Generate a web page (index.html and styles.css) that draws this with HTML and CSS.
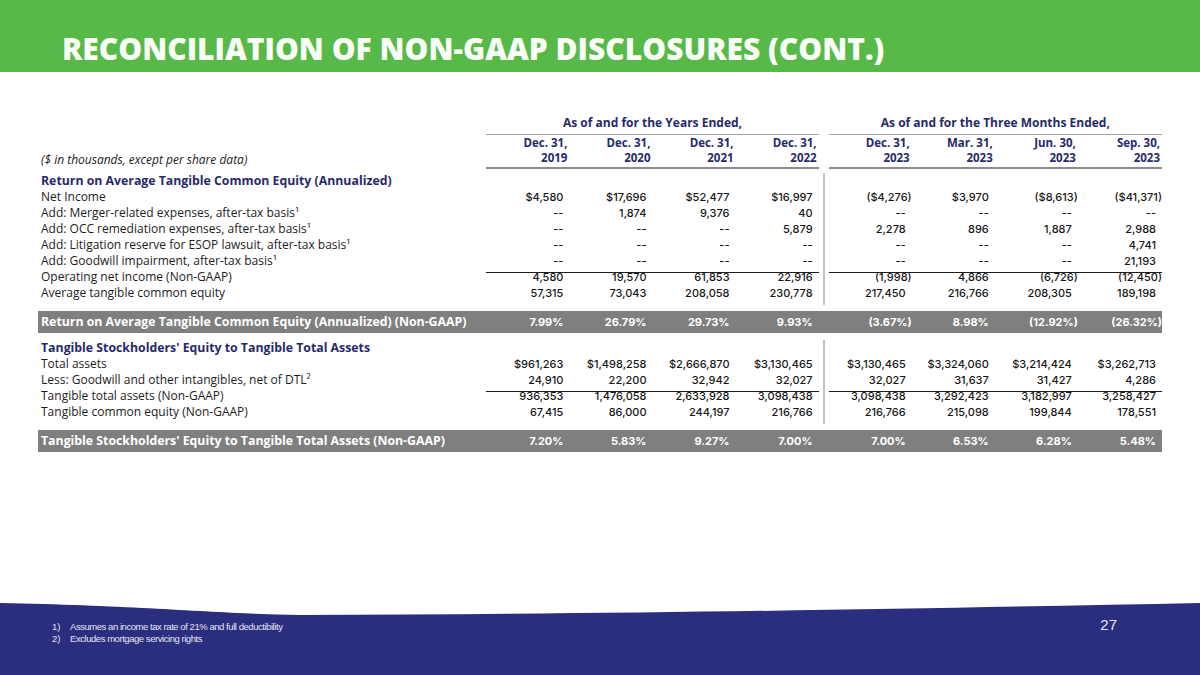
FILE: index.html
```html
<!DOCTYPE html>
<html lang="en">
<head>
<meta charset="utf-8">
<title>Reconciliation of Non-GAAP Disclosures (Cont.)</title>
<link rel="stylesheet" href="styles.css">
</head>
<body>
<div class="slide">
  <header class="banner">
    <h1>RECONCILIATION OF NON-GAAP DISCLOSURES (CONT.)</h1>
  </header>

  <main class="content">
    <table class="recon">
      <colgroup>
        <col class="c-label">
        <col class="c-num"><col class="c-num"><col class="c-num"><col class="c-num">
        <col class="c-sep">
        <col class="c-num"><col class="c-num"><col class="c-num"><col class="c-last">
      </colgroup>
      <thead>
        <tr class="group">
          <th class="blank"></th>
          <th colspan="4">As of and for the Years Ended,</th>
          <th class="sep"></th>
          <th colspan="4">As of and for the Three Months Ended,</th>
        </tr>
        <tr class="dates">
          <th class="unit">($ in thousands, except per share data)</th>
          <th>Dec. 31,<br>2019</th>
          <th>Dec. 31,<br>2020</th>
          <th>Dec. 31,<br>2021</th>
          <th>Dec. 31,<br>2022</th>
          <th class="sep"></th>
          <th>Dec. 31,<br>2023</th>
          <th>Mar. 31,<br>2023</th>
          <th>Jun. 30,<br>2023</th>
          <th>Sep. 30,<br>2023</th>
        </tr>
      </thead>
      <tbody>
        <tr class="sec">
          <td class="lbl">Return on Average Tangible Common Equity (Annualized)</td>
          <td colspan="4"></td><td class="sep line-top"></td><td colspan="4"></td>
        </tr>
        <tr>
          <td class="lbl">Net Income</td>
          <td class="n">$4,580</td><td class="n">$17,696</td><td class="n">$52,477</td><td class="n">$16,997</td>
          <td class="sep line"></td>
          <td class="n p">($4,276)</td><td class="n">$3,970</td><td class="n p">($8,613)</td><td class="n p">($41,371)</td>
        </tr>
        <tr>
          <td class="lbl">Add: Merger-related expenses, after-tax basis¹</td>
          <td class="n">--</td><td class="n">1,874</td><td class="n">9,376</td><td class="n">40</td>
          <td class="sep line"></td>
          <td class="n">--</td><td class="n">--</td><td class="n">--</td><td class="n">--</td>
        </tr>
        <tr>
          <td class="lbl">Add: OCC remediation expenses, after-tax basis¹</td>
          <td class="n">--</td><td class="n">--</td><td class="n">--</td><td class="n">5,879</td>
          <td class="sep line"></td>
          <td class="n">2,278</td><td class="n">896</td><td class="n">1,887</td><td class="n">2,988</td>
        </tr>
        <tr>
          <td class="lbl">Add: Litigation reserve for ESOP lawsuit, after-tax basis¹</td>
          <td class="n">--</td><td class="n">--</td><td class="n">--</td><td class="n">--</td>
          <td class="sep line"></td>
          <td class="n">--</td><td class="n">--</td><td class="n">--</td><td class="n">4,741</td>
        </tr>
        <tr>
          <td class="lbl">Add: Goodwill impairment, after-tax basis¹</td>
          <td class="n">--</td><td class="n">--</td><td class="n">--</td><td class="n">--</td>
          <td class="sep line"></td>
          <td class="n">--</td><td class="n">--</td><td class="n">--</td><td class="n">21,193</td>
        </tr>
        <tr class="tot">
          <td class="lbl">Operating net income (Non-GAAP)</td>
          <td class="n">4,580</td><td class="n">19,570</td><td class="n">61,853</td><td class="n">22,916</td>
          <td class="sep line"></td>
          <td class="n p">(1,998)</td><td class="n">4,866</td><td class="n p">(6,726)</td><td class="n p">(12,450)</td>
        </tr>
        <tr>
          <td class="lbl">Average tangible common equity</td>
          <td class="n">57,315</td><td class="n">73,043</td><td class="n">208,058</td><td class="n">230,778</td>
          <td class="sep line"></td>
          <td class="n">217,450</td><td class="n">216,766</td><td class="n">208,305</td><td class="n">189,198</td>
        </tr>
        <tr class="gap">
          <td></td><td colspan="4"></td><td class="sep line-half"></td><td colspan="4"></td>
        </tr>
        <tr class="band">
          <td class="lbl">Return on Average Tangible Common Equity (Annualized) (Non-GAAP)</td>
          <td class="n">7.99%</td><td class="n">26.79%</td><td class="n">29.73%</td><td class="n">9.93%</td>
          <td class="sep"></td>
          <td class="n p">(3.67%)</td><td class="n">8.98%</td><td class="n p">(12.92%)</td><td class="n p">(26.32%)</td>
        </tr>
        <tr class="gap small">
          <td></td><td colspan="4"></td><td class="sep"></td><td colspan="4"></td>
        </tr>
        <tr class="sec2">
          <td class="lbl">Tangible Stockholders' Equity to Tangible Total Assets</td>
          <td colspan="4"></td><td class="sep line"></td><td colspan="4"></td>
        </tr>
        <tr>
          <td class="lbl">Total assets</td>
          <td class="n">$961,263</td><td class="n">$1,498,258</td><td class="n">$2,666,870</td><td class="n">$3,130,465</td>
          <td class="sep line"></td>
          <td class="n">$3,130,465</td><td class="n">$3,324,060</td><td class="n">$3,214,424</td><td class="n">$3,262,713</td>
        </tr>
        <tr>
          <td class="lbl">Less: Goodwill and other intangibles, net of DTL²</td>
          <td class="n">24,910</td><td class="n">22,200</td><td class="n">32,942</td><td class="n">32,027</td>
          <td class="sep line"></td>
          <td class="n">32,027</td><td class="n">31,637</td><td class="n">31,427</td><td class="n">4,286</td>
        </tr>
        <tr class="tot">
          <td class="lbl">Tangible total assets (Non-GAAP)</td>
          <td class="n">936,353</td><td class="n">1,476,058</td><td class="n">2,633,928</td><td class="n">3,098,438</td>
          <td class="sep line"></td>
          <td class="n">3,098,438</td><td class="n">3,292,423</td><td class="n">3,182,997</td><td class="n">3,258,427</td>
        </tr>
        <tr>
          <td class="lbl">Tangible common equity (Non-GAAP)</td>
          <td class="n">67,415</td><td class="n">86,000</td><td class="n">244,197</td><td class="n">216,766</td>
          <td class="sep line"></td>
          <td class="n">216,766</td><td class="n">215,098</td><td class="n">199,844</td><td class="n">178,551</td>
        </tr>
        <tr class="gap">
          <td></td><td colspan="4"></td><td class="sep line-half"></td><td colspan="4"></td>
        </tr>
        <tr class="band">
          <td class="lbl">Tangible Stockholders' Equity to Tangible Total Assets (Non-GAAP)</td>
          <td class="n">7.20%</td><td class="n">5.83%</td><td class="n">9.27%</td><td class="n">7.00%</td>
          <td class="sep"></td>
          <td class="n">7.00%</td><td class="n">6.53%</td><td class="n">6.28%</td><td class="n">5.48%</td>
        </tr>
      </tbody>
    </table>
  </main>

  <footer class="footer">
    <svg class="wave" viewBox="0 0 1200 12" preserveAspectRatio="none" aria-hidden="true">
      <path d="M0,0 C150,3 220,11 300,12 C650,11 950,5 1200,0 L1200,12 L0,12 Z" fill="#2b2e7e"/>
    </svg>
    <div class="foot-body">
      <ol class="notes">
        <li><span class="num">1)</span><span>Assumes an income tax rate of 21% and full deductibility</span></li>
        <li><span class="num">2)</span><span>Excludes mortgage servicing rights</span></li>
      </ol>
      <div class="page">27</div>
    </div>
  </footer>
</div>
</body>
</html>
```

FILE: styles.css
```css
* { box-sizing: border-box; }

html, body {
  margin: 0;
  padding: 0;
}

body {
  width: 1200px;
  height: 675px;
  overflow: hidden;
  background: #ffffff;
  font-family: "Open Sans", "Liberation Sans", sans-serif;
  color: #1c1c1c;
}

.slide {
  width: 1200px;
  height: 675px;
  display: flex;
  flex-direction: column;
}

/* ---------- Banner ---------- */
.banner {
  height: 72px;
  flex: none;
  background: #57b947;
  padding: 33px 0 0 62px;
}

.banner h1 {
  margin: 0;
  font-size: 30px;
  line-height: 31px;
  font-weight: 800;
  color: #fbfdf8;
  white-space: nowrap;
}

/* ---------- Table ---------- */
.content {
  padding: 42px 38px 0 38px;
}

.recon {
  width: 1124px;
  table-layout: fixed;
  border-collapse: separate;
  border-spacing: 0;
  font-size: 12px;
  line-height: 16px;
}

.c-label { width: 448px; }
.c-num   { width: 83px; }
.c-sep   { width: 10px; }
.c-last  { width: 84px; }

.recon th,
.recon td {
  padding: 0;
  white-space: nowrap;
}

.group th {
  font-weight: 700;
  color: #262a6b;
  text-align: center;
  vertical-align: bottom;
  padding: 1px 0 3px;
  border-bottom: 1px solid #a3a3a3;
}

.group th.blank,
.group th.sep {
  border-bottom: none;
}

.dates th {
  font-size: 11.5px;
  font-weight: 700;
  color: #262a6b;
  text-align: right;
  vertical-align: bottom;
  line-height: 15px;
  padding: 0 2px 2px 0;
  border-bottom: 2px solid #8c8c8c;
}

.dates th.unit {
  font-size: 12px;
  font-style: italic;
  font-weight: 400;
  color: #1c1c1c;
  text-align: left;
  padding-left: 3px;
  border-bottom: none;
}

.dates th.sep {
  border-bottom: none;
}

.lbl {
  padding-left: 3px !important;
  text-align: left;
}

.sec td {
  padding-top: 4px;
}

.sec .lbl,
.sec2 .lbl {
  font-size: 12.3px;
  font-weight: 700;
  color: #262a6b;
}

.n {
  text-align: right;
  padding-right: 6px !important;
  font-family: "Inter", "Open Sans", sans-serif;
  font-size: 11px;
  font-weight: 500;
  color: #161616;
}

.n.p {
  padding-right: 0 !important;
}

/* vertical divider between the annual and quarterly blocks */
.sep.line {
  background: linear-gradient(#c2c2c2, #c2c2c2) no-repeat center top / 2px 100%;
}

.sep.line-top {
  background: linear-gradient(#c2c2c2, #c2c2c2) no-repeat center 4px / 2px 100%;
}

.sep.line-half {
  background: linear-gradient(#c2c2c2, #c2c2c2) no-repeat center top / 2px 4px;
}

/* subtotal rule */
.tot .n {
  background: linear-gradient(#1e1e1e, #1e1e1e) no-repeat 0 3px / 100% 1px;
}

.gap td {
  height: 10px;
  font-size: 0;
  line-height: 0;
}

.gap.small td {
  height: 7px;
}

.band td {
  height: 22px;
  line-height: 22px;
  background: #7f7f7f;
  color: #ffffff;
  font-weight: 700;
}

.band .lbl {
  font-size: 12.3px;
}

.band .n {
  font-weight: 700;
  color: #ffffff;
}

/* ---------- Footer ---------- */
.footer {
  margin-top: auto;
  flex: none;
}

.wave {
  display: block;
  width: 1200px;
  height: 12px;
}

.foot-body {
  height: 60px;
  background: #2b2e7e;
  display: flex;
  justify-content: space-between;
  align-items: flex-start;
}

.notes {
  margin: 0;
  padding: 6px 0 0 52px;
  list-style: none;
  font-family: "Liberation Sans Narrow", "Liberation Sans", sans-serif;
  font-size: 9.5px;
  line-height: 12px;
  letter-spacing: -0.45px;
  color: #e4e5f2;
}

.notes li {
  display: flex;
}

.notes .num {
  width: 18px;
  letter-spacing: 0;
}

.page {
  font-family: "Liberation Sans", Arial, sans-serif;
  font-size: 15px;
  line-height: 18px;
  color: #e6e7f4;
  margin: 1px 83px 0 0;
}
```
